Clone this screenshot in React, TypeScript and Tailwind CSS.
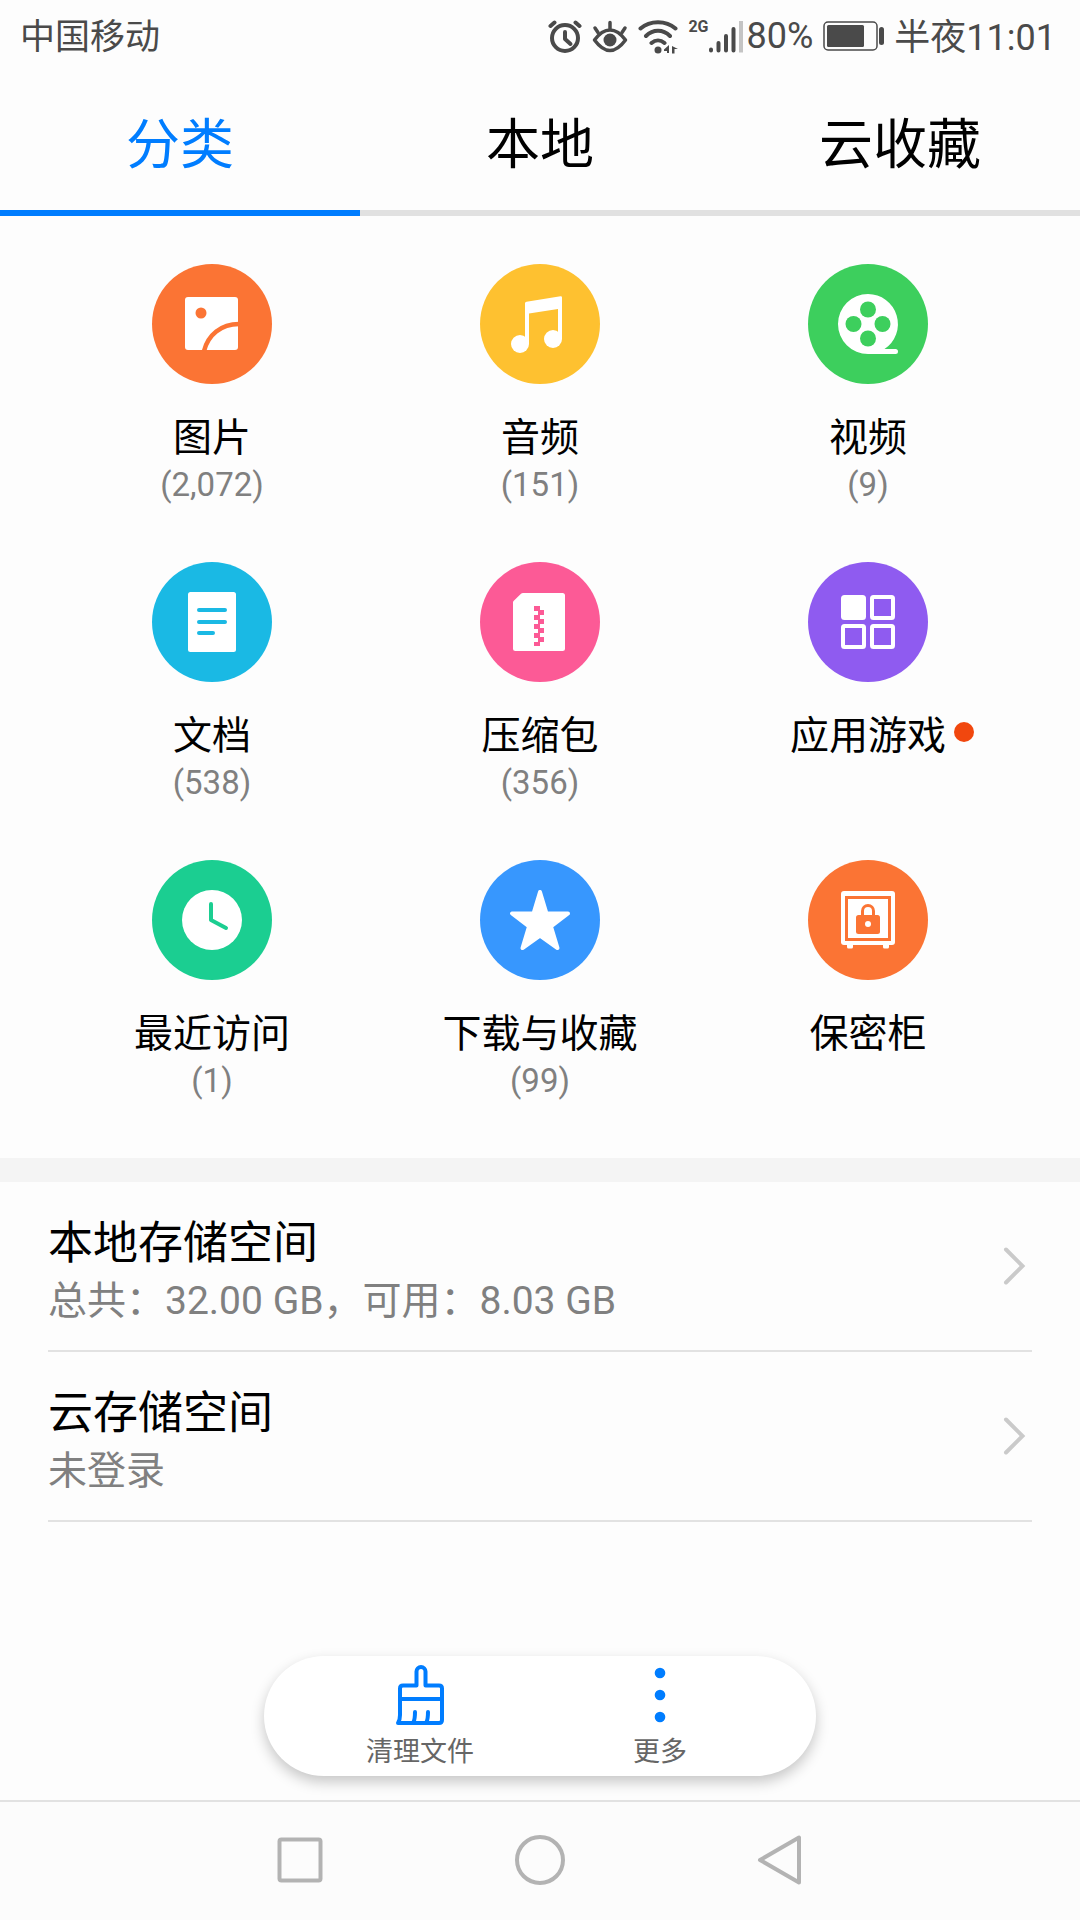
import { useState } from 'react';
import type { ReactNode } from 'react';

const TABS = ['分类', '本地', '云收藏'];

type Category = {
  label: string;
  count?: string;
  color: string;
  icon: ReactNode;
  hasUpdate?: boolean;
};

/** Category glyphs share a 120x120 canvas, the size of the round badge. */
const CATEGORIES: Category[] = [
  {
    label: '图片',
    count: '(2,072)',
    color: 'bg-[#fb7434] text-[#fb7434]',
    icon: (
      <>
        <rect x="33" y="33" width="53" height="53" rx="3" fill="#fff" />
        <circle cx="49" cy="49" r="5.5" fill="currentColor" />
        <path d="M52 87C56 71 69 60 87 60" fill="none" stroke="currentColor" strokeWidth="4.5" />
      </>
    ),
  },
  {
    label: '音频',
    count: '(151)',
    color: 'bg-[#fec130] text-[#fec130]',
    icon: (
      <g fill="#fff">
        <circle cx="40" cy="80" r="9" />
        <circle cx="73" cy="75" r="9" />
        <path d="M45 80V39.5Q45 38 46.5 37.7L80.5 32.2Q82 32 82 33.5V75H78V45L49 49.5V80Z" />
      </g>
    ),
  },
  {
    label: '视频',
    count: '(9)',
    color: 'bg-[#3dcf5d] text-[#3dcf5d]',
    icon: (
      <>
        <path
          d="M60 30A30 30 0 0 1 76.5 85H87.5A2.5 2.5 0 0 1 87.5 90H60A30 30 0 0 1 60 30Z"
          fill="#fff"
        />
        <g fill="currentColor">
          <circle cx="60" cy="45.5" r="8" />
          <circle cx="45.5" cy="60" r="8" />
          <circle cx="74.5" cy="60" r="8" />
          <circle cx="60" cy="74.5" r="8" />
        </g>
      </>
    ),
  },
  {
    label: '文档',
    count: '(538)',
    color: 'bg-[#1ab9e4] text-[#1ab9e4]',
    icon: (
      <>
        <rect x="36" y="30" width="48" height="60" rx="2.5" fill="#fff" />
        <path d="M47 48H73M47 60H73M47 71H61" stroke="currentColor" strokeWidth="4" strokeLinecap="round" />
      </>
    ),
  },
  {
    label: '压缩包',
    count: '(356)',
    color: 'bg-[#fc5a96] text-[#fc5a96]',
    icon: (
      <>
        <path
          d="M43 31H82.5Q85 31 85 33.5V86.5Q85 89 82.5 89H35.5Q33 89 33 86.5V40.5Q33 39.5 33.8 38.7L41 31.8Q41.8 31 43 31Z"
          fill="#fff"
        />
        <path
          d="M54 44h6v4h4v5h-4v4h4v5h-4v4h4v5h-4v4h4v5h-4v4h-6v-4h4v-4h-4v-5h4v-4h-4v-5h4v-4h-4v-5h4v-4h-4z"
          fill="currentColor"
        />
      </>
    ),
  },
  {
    label: '应用游戏',
    color: 'bg-[#8f5bf0] text-[#8f5bf0]',
    hasUpdate: true,
    icon: (
      <>
        <rect x="33" y="33" width="25" height="25" rx="3.5" fill="#fff" />
        <g fill="none" stroke="#fff" strokeWidth="4">
          <rect x="64" y="35" width="21" height="21" rx="1.5" />
          <rect x="35" y="64" width="21" height="21" rx="1.5" />
          <rect x="64" y="64" width="21" height="21" rx="1.5" />
        </g>
      </>
    ),
  },
  {
    label: '最近访问',
    count: '(1)',
    color: 'bg-[#1bce91] text-[#1bce91]',
    icon: (
      <>
        <circle cx="60" cy="60" r="30" fill="#fff" />
        <path
          d="M59 44V60L74 68"
          fill="none"
          stroke="currentColor"
          strokeWidth="4"
          strokeLinecap="round"
          strokeLinejoin="round"
        />
      </>
    ),
  },
  {
    label: '下载与收藏',
    count: '(99)',
    color: 'bg-[#3797fe] text-[#3797fe]',
    icon: (
      <path
        d="M60 32L66.5 53.5H88L71 66.5L77.5 88L60 75.5L42.5 88L49 66.5L32 53.5H53.5Z"
        fill="#fff"
        stroke="#fff"
        strokeWidth="4"
        strokeLinejoin="round"
      />
    ),
  },
  {
    label: '保密柜',
    color: 'bg-[#fb7434] text-[#fb7434]',
    icon: (
      <>
        <rect x="33" y="31" width="54" height="54" rx="3" fill="#fff" />
        <path
          d="M39 84h6v3a1.5 1.5 0 0 1-1.5 1.5h-3A1.5 1.5 0 0 1 39 87zM75 84h6v3a1.5 1.5 0 0 1-1.5 1.5h-3A1.5 1.5 0 0 1 75 87z"
          fill="#fff"
        />
        <rect x="38.5" y="37.5" width="43" height="42" fill="none" stroke="currentColor" strokeWidth="3" />
        <rect x="48" y="55" width="24" height="19" rx="2.5" fill="currentColor" />
        <path d="M54.5 56V51a5.5 5.5 0 0 1 11 0V56" fill="none" stroke="currentColor" strokeWidth="3" />
        <circle cx="60" cy="64" r="3" fill="#fff" />
      </>
    ),
  },
];

const STORAGE = [
  { title: '本地存储空间', detail: '总共：32.00 GB，可用：8.03 GB' },
  { title: '云存储空间', detail: '未登录' },
];

function StatusBar() {
  return (
    <header className="flex h-18 items-center justify-between pr-6 pl-5 text-[36px] leading-[42px] text-[#4a4a4a]">
      <span className="pt-1 text-[35px]">中国移动</span>
      <div className="flex items-center gap-2.5">
        <svg className="h-9 w-[34px]" viewBox="0 0 34 36" fill="none" stroke="currentColor" strokeWidth="4" strokeLinecap="round" aria-label="闹钟">
          <circle cx="17" cy="20" r="13" />
          <path d="M17 14V21L22.5 26" strokeLinejoin="round" />
          <path d="M2.5 8L6.5 4.5M31.5 8L27.5 4.5" />
        </svg>
        <svg className="h-9 w-9" viewBox="0 0 36 36" fill="none" stroke="currentColor" strokeWidth="3.5" strokeLinecap="round" aria-label="护眼模式">
          <path d="M2.5 22C8 14.500 13 12 18 12S28 14.500 33.5 22C28 29.500 23 32.500 18 32.500S8 29.500 2.5 22Z" strokeLinejoin="round" />
          <circle cx="18" cy="22" r="6.5" fill="currentColor" stroke="none" />
          <path d="M18 10.500V4.500M6 14.500L3 10M30 14.500L33 10" />
        </svg>
        <svg className="h-9 w-10" viewBox="0 0 40 36" fill="none" stroke="currentColor" strokeWidth="4" strokeLinecap="round" aria-label="无线网络">
          <path d="M2.5 10.500C12 2 28 2 37.5 10.500M8 18C15 11 25 11 32 18M13.5 25C17.500 21.500 22.500 21.500 26.5 25" />
          <circle cx="20" cy="32" r="3.5" fill="currentColor" stroke="none" />
          <path d="M31 27V35H29V33H26V31.500ZM34 35.500V28L40 31H36.5V35.500Z" fill="currentColor" stroke="none" />
        </svg>
        <div className="flex items-center gap-1">
          <span className="flex items-start">
            <span className="text-[16px] leading-[18px] font-bold">2G</span>
            <svg className="h-9 w-[34px]" viewBox="2 0 34 36" fill="none" stroke="currentColor" strokeWidth="4" strokeLinecap="round" aria-label="信号">
              <path d="M4 31.5V32.5M11.5 25V32.5M19 18V32.5M26.5 11V32.5" />
              <path d="M34 3V34.5" stroke="#c4c4c4" strokeLinecap="butt" />
            </svg>
          </span>
          <span>80%</span>
        </div>
        <svg className="h-9 w-[61px]" viewBox="0 0 61 36" aria-label="电量">
          <rect x="1" y="4" width="53" height="28" rx="4" fill="none" stroke="currentColor" strokeWidth="1.5" />
          <rect x="4" y="7" width="37" height="22" rx="1.5" fill="currentColor" />
          <rect x="56" y="9" width="5" height="18" rx="2.5" fill="currentColor" />
        </svg>
        <span className="pt-1">半夜11:01</span>
      </div>
    </header>
  );
}

function Tabs() {
  const [active, setActive] = useState(0);

  return (
    <div role="tablist" className="grid grid-cols-3">
      {TABS.map((tab, index) => (
        <button
          key={tab}
          type="button"
          role="tab"
          aria-selected={index === active}
          onClick={() => setActive(index)}
          className={
            index === active
              ? 'h-36 border-b-6 border-[#007dff] pt-2.5 text-[54px] leading-[60px] text-[#007dff]'
              : 'h-36 border-b-6 border-[#e1e1e1] pt-2.5 text-[54px] leading-[60px] text-black'
          }
        >
          {tab}
        </button>
      ))}
    </div>
  );
}

function CategoryButton({ label, count, color, icon, hasUpdate }: Category) {
  return (
    <button type="button" className="flex flex-col items-center">
      <span className={`mb-[30px] size-30 rounded-full ${color}`}>
        <svg className="size-30" viewBox="0 0 120 120" aria-hidden>
          {icon}
        </svg>
      </span>
      <span className="relative text-[39px] leading-[48px] text-black">
        {label}
        {hasUpdate && <span className="absolute top-2.5 left-full ml-2 size-5 rounded-full bg-[#f1470e]" />}
      </span>
      {count && <span className="text-[33px] leading-[46px] text-[#808080]">{count}</span>}
    </button>
  );
}

function StorageRow({ title, detail }: { title: string; detail: string }) {
  return (
    <button
      type="button"
      className="flex w-full items-center justify-between border-b-2 border-[#e2e2e2] pt-8 pr-1.5 pb-[22px] text-left"
    >
      <span className="flex flex-col">
        <span className="text-[45px] leading-[60px] text-black">{title}</span>
        <span className="text-[39px] leading-[54px] text-[#808080]">{detail}</span>
      </span>
      <svg
        className="mb-2.5 h-10 w-6"
        viewBox="0 0 24 40"
        fill="none"
        stroke="#cacaca"
        strokeWidth="4"
        strokeLinecap="round"
        aria-hidden
      >
        <path d="M4 3.5L20.5 20L4 36.500" />
      </svg>
    </button>
  );
}

function ActionBar() {
  return (
    <div className="mx-auto mt-auto mb-6 flex h-30 rounded-full bg-white px-9 text-[27px] leading-[36px] text-[#666] shadow-[0_6px_14px_rgba(0,0,0,0.22)]">
      <button type="button" className="flex w-60 flex-col items-center pt-2">
        <svg
          className="mb-1.5 h-16 w-12"
          viewBox="0 0 48 64"
          fill="none"
          stroke="#007dff"
          strokeWidth="4"
          strokeLinecap="round"
          strokeLinejoin="round"
          aria-hidden
        >
          <path d="M20.5 21.5V7.5a4.5 4.5 0 0 1 9 0V21.5H43Q46 21.5 46 24.5V56Q46 59 43 59H2Q4 56 4 51V24.5Q4 21.5 7 21.5Z" />
          <path d="M4 35H46M19 48Q19 55 17.5 58M32 48Q32 55 30.5 58" />
        </svg>
        清理文件
      </button>
      <button type="button" className="flex w-60 flex-col items-center pt-2">
        <svg className="mb-1.5 h-16 w-12" viewBox="0 0 48 64" fill="#007dff" aria-hidden>
          <circle cx="24" cy="9" r="5.3" />
          <circle cx="24" cy="31" r="5.3" />
          <circle cx="24" cy="53" r="5.3" />
        </svg>
        更多
      </button>
    </div>
  );
}

function NavigationBar() {
  return (
    <nav className="flex h-30 justify-center border-t-2 border-[#e2e2e2] bg-[#fcfcfc] pb-0.5">
      <button type="button" aria-label="最近任务" className="flex w-60 items-center justify-center">
        <svg className="size-13" viewBox="0 0 52 52" fill="none" stroke="#b3b3b3" strokeWidth="4">
          <rect x="5.5" y="5.5" width="41" height="41" rx="2" />
        </svg>
      </button>
      <button type="button" aria-label="主屏幕" className="flex w-60 items-center justify-center">
        <svg className="size-13" viewBox="0 0 52 52" fill="none" stroke="#b3b3b3" strokeWidth="4">
          <circle cx="26" cy="26" r="23" />
        </svg>
      </button>
      <button type="button" aria-label="返回" className="flex w-60 items-center justify-center">
        <svg className="size-13" viewBox="0 0 52 52" fill="none" stroke="#b3b3b3" strokeWidth="4" strokeLinejoin="round">
          <path d="M6 26L45 3.5V48.5Z" />
        </svg>
      </button>
    </nav>
  );
}

export default function App() {
  return (
    <div className="flex min-h-screen flex-col bg-[#fdfdfd] font-['Roboto','Noto_Sans_CJK_SC',sans-serif]" lang="zh-CN">
      <StatusBar />
      <Tabs />
      <main className="flex flex-1 flex-col">
        <section className="grid grid-cols-3 gap-y-[54px] border-b-24 border-[#f4f4f4] px-12 pt-12 pb-[54px]">
          {CATEGORIES.map((category) => (
            <CategoryButton key={category.label} {...category} />
          ))}
        </section>
        <section className="px-12">
          {STORAGE.map((row) => (
            <StorageRow key={row.title} {...row} />
          ))}
        </section>
        <ActionBar />
      </main>
      <NavigationBar />
    </div>
  );
}
